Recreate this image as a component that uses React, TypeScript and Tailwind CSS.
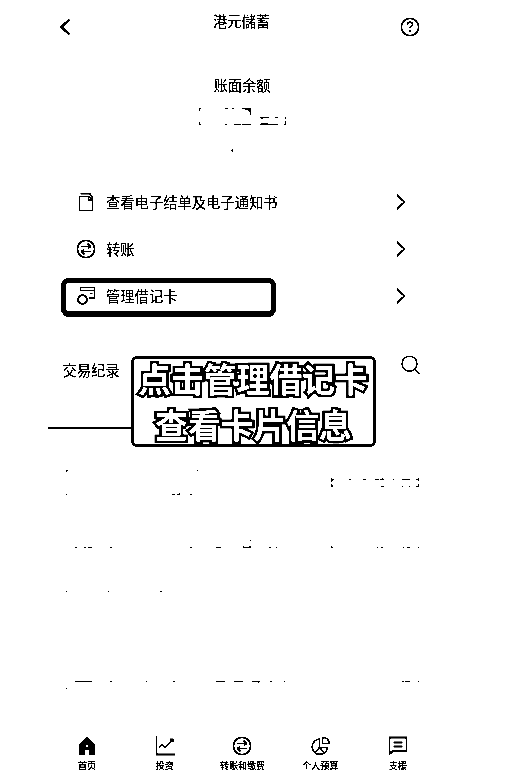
import type { ReactNode } from "react";

type Mark = [x: number, y: number, w: number, h: number];

// Remnants of the hidden balance digits, relative to the balance block.
const balanceMarks: Mark[] = [
  [199, 0, 2, 1], [199, 0, 1, 3], [225, 0, 3, 1], [232, 0, 2, 1], [242, 0, 9, 1],
  [245, 1, 6, 1], [248, 2, 3, 1], [249, 3, 2, 1], [250, 4, 1, 3],
  [199, 14, 1, 3], [199, 16, 2, 1], [225, 16, 2, 1], [234, 16, 7, 1], [242, 16, 9, 1],
  [260, 9, 9, 1], [261, 10, 2, 1], [275, 9, 3, 1], [285, 9, 1, 2],
  [261, 15, 7, 1], [260, 16, 18, 1], [285, 13, 1, 4], [284, 16, 1, 1],
  [232, 41, 1, 3], [231, 42, 1, 1],
];

// Remnants of the hidden transaction rows, relative to the divider line.
const transactionMarks: Mark[] = [
  [66, 41, 2, 1], [66, 41, 1, 2], [197, 41, 1, 1], [66, 65, 1, 1], [172, 65, 3, 1],
  [177, 65, 3, 1], [179, 64, 1, 1], [190, 65, 2, 1],
  [331, 49, 1, 4], [332, 50, 2, 1], [332, 51, 1, 1], [331, 55, 1, 3], [332, 56, 1, 2],
  [349, 50, 2, 1], [363, 50, 3, 1], [375, 50, 4, 1], [380, 50, 4, 1], [382, 49, 1, 1],
  [393, 50, 1, 1], [402, 50, 8, 1], [416, 50, 2, 1], [418, 49, 1, 3],
  [381, 57, 3, 1], [402, 57, 1, 1], [409, 57, 1, 1], [416, 57, 2, 1], [418, 55, 1, 3],
  [75, 118, 2, 1], [84, 118, 2, 1], [88, 118, 4, 1], [110, 118, 2, 1], [190, 118, 2, 1],
  [216, 118, 5, 1], [250, 111, 1, 1], [243, 118, 8, 1], [243, 117, 1, 1], [249, 117, 2, 1],
  [269, 118, 2, 1], [276, 118, 1, 1], [331, 118, 2, 1], [331, 117, 1, 1], [377, 118, 1, 1],
  [381, 118, 2, 1], [403, 118, 1, 1], [407, 118, 3, 1], [418, 118, 1, 1],
  [66, 162, 1, 1], [108, 162, 1, 1], [160, 162, 2, 1],
  [75, 252, 17, 1], [110, 252, 2, 1], [146, 252, 1, 1], [173, 252, 2, 1], [216, 252, 9, 1],
  [234, 252, 9, 1], [252, 252, 8, 1], [258, 253, 1, 1], [270, 252, 2, 1], [284, 252, 1, 1],
  [402, 252, 2, 1], [405, 252, 5, 1], [418, 252, 1, 1], [66, 259, 1, 1],
];

function Marks({ marks, height }: { marks: Mark[]; height: number }) {
  return (
    <svg width="522" height={height} shapeRendering="crispEdges" className="block shrink-0">
      {marks.map(([x, y, w, h], i) => (
        <rect key={i} x={x} y={y} width={w} height={h} />
      ))}
    </svg>
  );
}

function Icon({ children, stroke = 1.8 }: { children: ReactNode; stroke?: number }) {
  return (
    <svg width="20" height="20" viewBox="0 0 20 20" fill="none" stroke="black" strokeWidth={stroke} className="block shrink-0">
      {children}
    </svg>
  );
}

const TransferIcon = () => (
  <Icon>
    <circle cx="10" cy="10" r="8.600" />
    <path d="M5 7.500h9.500M5.500 12.500h9.500" strokeWidth="1.600" />
    <path d="M11.500 4.500l3 3-2.500 2.300M8.500 15.500l-3-3 2.500-2.300" strokeWidth="1.500" />
  </Icon>
);

const DocumentIcon = () => (
  <Icon>
    <path d="M3.500 5v13.500h13V8l-3.500-3.500H3" strokeWidth="1.600" />
    <path d="M4.500 1.700h9l3 3.300v3" strokeWidth="1.800" />
    <path d="M12.500 5v3h3.500" strokeWidth="1.400" />
  </Icon>
);

const CardIcon = () => (
  <Icon>
    <path d="M4.500 5V1.500h14v10.500H13" strokeWidth="1.600" />
    <path d="M5 4.500h13M14 7.500h2.500" strokeWidth="1.300" />
    <circle cx="6.500" cy="13.500" r="4.300" strokeWidth="2.200" />
  </Icon>
);

const Chevron = () => (
  <svg width="12" height="18" viewBox="0 0 12 18" fill="none" stroke="black" strokeWidth="2">
    <path d="M2 1.800l7.500 7.200-7.500 7.200" />
  </svg>
);

function MenuRow({ icon, label }: { icon: ReactNode; label: string }) {
  return (
    <div className="flex h-[47px] items-center pl-[76px] pr-[115px]">
      {icon}
      <span className="ml-2.5 flex-1 text-[14.3px] leading-5 font-medium">{label}</span>
      <Chevron />
    </div>
  );
}

function Tab({ icon, label }: { icon: ReactNode; label: string }) {
  return (
    <div className="flex w-[77.8px] flex-col items-center">
      {icon}
      <span className="mt-1 text-[9px] leading-3 font-bold whitespace-nowrap">{label}</span>
    </div>
  );
}

export default function App() {
  return (
    <div className="relative flex h-[774px] w-[522px] flex-col overflow-hidden bg-white font-['Noto_Sans_CJK_SC','Liberation_Sans',sans-serif] text-black contrast-[20]">
      <header className="flex h-14 shrink-0 items-start pl-[59px] pr-[102px]">
        <svg width="14" height="20" viewBox="0 0 14 20" fill="none" stroke="black" strokeWidth="2.400" className="mt-[17px]">
          <path d="M10.500 2.500L2.500 10l8 7.500" />
        </svg>
        <h1 className="mt-[11px] flex-1 pl-[10px] text-center text-[14.3px] leading-5 font-medium">港元儲蓄</h1>
        <div className="mt-[17px]">
          <Icon stroke={1.6}>
            <circle cx="10" cy="10" r="8.600" />
            <path d="M7.500 7.800c0-3.500 5-3.500 5-.5 0 2-2.500 2-2.500 4.200M10 13v2" />
          </Icon>
        </div>
      </header>

      <section className="flex h-[122px] shrink-0 flex-col pt-[19px]">
        <p className="w-[484px] text-center text-[14.3px] leading-5 font-medium">账面余额</p>
        <div className="mt-[13px]">
          <Marks marks={balanceMarks} height={50} />
        </div>
      </section>

      <nav>
        <MenuRow icon={<DocumentIcon />} label="查看电子结单及电子通知书" />
        <MenuRow icon={<TransferIcon />} label="转账" />
        <MenuRow icon={<CardIcon />} label="管理借记卡" />
      </nav>

      <section className="flex h-[108px] shrink-0 items-start justify-between pl-[62.500px] pr-[102px] pt-9">
        <h2 className="mt-[5px] text-[14.3px] leading-5 font-medium">交易纪录</h2>
        <Icon stroke={1.5}>
          <circle cx="9.500" cy="8.700" r="7.500" />
          <path d="M14.500 14l5 5" />
        </Icon>
      </section>
      <div className="ml-12 h-0.5 w-[84px] shrink-0 bg-black" />
      <Marks marks={transactionMarks} height={307} />

      <footer className="flex h-[38px] shrink-0 pl-12">
        <Tab
          label="首页"
          icon={
            <Icon>
              <path d="M2 19V8l8-7 8 7v11h-6v-5h-4v5z" fill="black" stroke="none" />
              <path d="M9 9h2v2H9z" fill="white" stroke="none" />
            </Icon>
          }
        />
        <Tab
          label="投资"
          icon={
            <Icon>
              <path d="M1.500 0v18.500H20" />
              <path d="M4 11.500l3-3 3 3 7.500-7.500M15 3.500h3v3" />
            </Icon>
          }
        />
        <Tab label="转账和缴费" icon={<TransferIcon />} />
        <Tab
          label="个人预算"
          icon={
            <Icon stroke={1.6}>
              <path d="M9.500 3a7.700 7.700 0 1 0 8 8.500H9.500zM9.500 11.500l-4.500 5M9.500 11.500l4.500 5" />
              <path d="M12.500 1.500v6h6.500c0-4-2.500-6-6.500-6z" />
            </Icon>
          }
        />
        <Tab
          label="支援"
          icon={
            <Icon>
              <path d="M1.500 18V1.500h17v13.500H5z" />
              <path d="M5.500 6.500h9M5.500 10.500h9" />
            </Icon>
          }
        />
      </footer>

      <div className="absolute left-[61px] top-[278px] h-[39px] w-[215px] rounded-lg border-[5px] border-b-[6px] border-black" />

      <div className="absolute left-[131px] top-[356px] flex h-[91px] w-[245px] flex-col items-center rounded-md border-[3px] border-black bg-white text-[32.800px] leading-[46px] font-bold whitespace-nowrap text-white [-webkit-text-stroke:5px_black] [paint-order:stroke_fill] [stroke-linejoin:round]">
        <span className="-mt-1 -ml-px h-[46px]">点击管理借记卡</span>
        <span className="h-[46px]">查看卡片信息</span>
      </div>
    </div>
  );
}
